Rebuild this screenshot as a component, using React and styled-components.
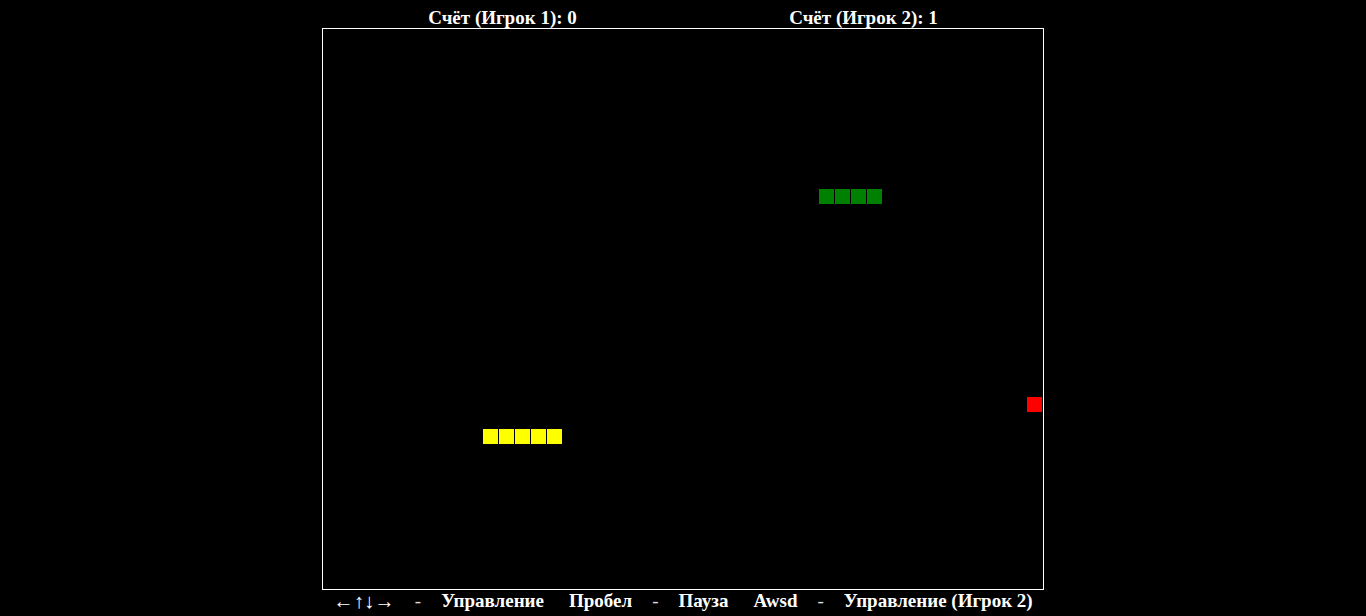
import React from "react";
import styled, { createGlobalStyle } from "styled-components";

const Global = createGlobalStyle`
  html, body { background: #000; }
  body {
    margin: 8px;
    color: #fff;
    font-family: "Liberation Serif", "Times New Roman", serif;
  }
`;

const Wrap = styled.div`
  display: flex;
  flex-direction: column;
  align-items: center;
`;

const Scores = styled.div`
  width: 722px;
  display: grid;
  grid-template-columns: 1fr 1fr;
`;

const Score = styled.div`
  text-align: center;
  font-weight: bold;
  font-size: 19px;
  line-height: 20px;
`;

const Board = styled.div`
  width: 720px;
  height: 560px;
  border: 1px solid #fff;
  display: grid;
  grid-template-columns: repeat(45, 16px);
  grid-template-rows: repeat(35, 16px);
`;

const Cell = styled.div`
  width: 15px;
  height: 15px;
  background: ${(p) => p.$color};
  grid-column: ${(p) => p.$x + 1};
  grid-row: ${(p) => p.$y + 1};
`;

const Controls = styled.div`
  display: flex;
  align-items: center;
  gap: 25px;
  font-size: 19px;
  line-height: 22px;
  font-weight: bold;
`;

const Group = styled.div`
  display: flex;
  align-items: center;
  gap: 20px;
`;

const Key = styled.span`
  font-weight: bold;
`;

const Arrows = styled.span`
  font-weight: normal;
  font-size: 20.5px;
`;

const Dash = styled.span`
  font-weight: normal;
  color: #ddd;
`;

const snake1 = [10, 11, 12, 13, 14].map((x) => ({ x, y: 25 }));
const snake2 = [31, 32, 33, 34].map((x) => ({ x, y: 10 }));

export default function App() {
  return (
    <>
      <Global />
      <Wrap>
        <Scores>
          <Score>Счёт (Игрок 1): 0</Score>
          <Score>Счёт (Игрок 2): 1</Score>
        </Scores>
        <Board>
          {snake1.map((c, i) => (
            <Cell key={"a" + i} $x={c.x} $y={c.y} $color="#ffff00" />
          ))}
          {snake2.map((c, i) => (
            <Cell key={"b" + i} $x={c.x} $y={c.y} $color="#008000" />
          ))}
          <Cell $x={44} $y={23} $color="#ff0000" />
        </Board>
        <Controls>
          <Group>
            <Arrows>←↑↓→</Arrows>
            <Dash>-</Dash>
            <Key>Управление</Key>
          </Group>
          <Group>
            <Key>Пробел</Key>
            <Dash>-</Dash>
            <Key>Пауза</Key>
          </Group>
          <Group>
            <Key>Awsd</Key>
            <Dash>-</Dash>
            <Key>Управление (Игрок 2)</Key>
          </Group>
        </Controls>
      </Wrap>
    </>
  );
}
